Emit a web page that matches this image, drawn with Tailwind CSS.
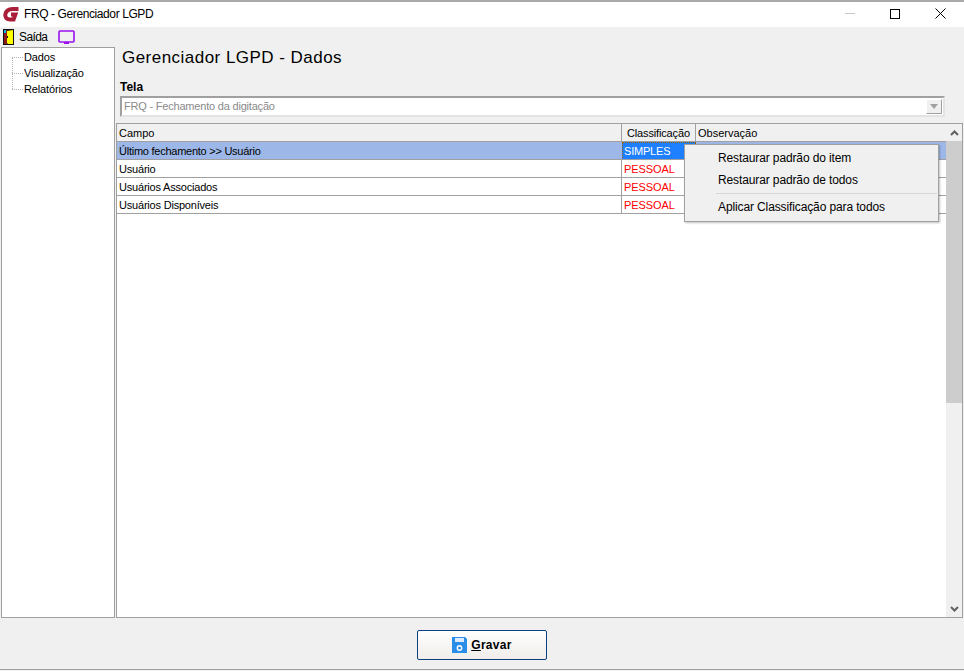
<!DOCTYPE html>
<html lang="en">
<head>
  <meta charset="UTF-8" />
  <title>FRQ - Gerenciador LGPD</title>
  <script src="https://cdn.jsdelivr.net/npm/@tailwindcss/browser@4"></script>
</head>
<body class="h-screen w-[964px] overflow-hidden bg-[#f0f0f0] font-['Liberation_Sans',sans-serif] text-[12px] text-black">
  <div class="relative flex h-[671px] flex-col">
    <!-- Title bar -->
    <div class="flex h-[27px] items-center border-t-2 border-t-[#a9a9a9] bg-white pb-[2px] pl-[3px]">
      <svg class="h-[17px] w-[17px]" viewBox="0 0 17 17">
        <path d="M15.5 4H9.5C5.5 4 3 6.3 2.4 9.2 1.8 12.4 3.8 14.5 7 14.5h3.6l1.8-5H8" fill="none" stroke="#ab1e3a" stroke-width="4" />
      </svg>
      <span class="ml-[4px] tracking-[-0.4px]">FRQ - Gerenciador LGPD</span>
      <div class="ml-auto flex items-center">
        <div class="mr-[35px] h-px w-[10px] bg-[#c8c8c8]"></div>
        <div class="mr-[35px] h-[10px] w-[10px] border border-black"></div>
        <svg class="mr-[18px] h-[11px] w-[11px]" viewBox="0 0 11 11"><path d="M.5.5l10 10M10.5.5l-10 10" stroke="#000" fill="none" /></svg>
      </div>
    </div>

    <!-- Menu bar -->
    <div class="flex h-[20px] items-center pl-[3px]">
      <svg class="h-[16px] w-[11px]" viewBox="0 0 11 16">
        <rect width="11" height="16" fill="#111" />
        <rect x="1" y="1" width="3" height="14" fill="#8a1a1a" />
        <path d="M4 2l6-1v14H5l-1-1z" fill="#ffff00" />
        <path d="M1 1h2v3H1z" fill="#00b5e8" />
        <path d="M4 7h1v2H4z" fill="#111" />
      </svg>
      <span class="ml-[5px] tracking-[-0.6px]">Saída</span>
      <svg class="ml-[11px] h-[15px] w-[17px]" viewBox="0 0 17 15">
        <rect x="1" y="1" width="15" height="11" rx="1" fill="none" stroke="#9b10f0" stroke-width="1.6" />
        <path d="M6 13h5" stroke="#9b10f0" stroke-width="2" />
      </svg>
    </div>

    <!-- Body -->
    <div class="flex h-[571px] pl-[1px]">
      <!-- Tree -->
      <div class="relative h-full w-[114px] shrink-0 border border-[#a0a0a0] bg-white pt-[1px] text-[11px] tracking-[-0.15px]">
        <div class="absolute left-[10px] top-[9px] h-[32px] border-l border-dotted border-[#b4b4b4]"></div>
        <div class="flex h-[16px] items-center pl-[10px]"><span class="w-[11px] border-t border-dotted border-[#b4b4b4]"></span><span class="ml-px">Dados</span></div>
        <div class="flex h-[16px] items-center pl-[10px]"><span class="w-[11px] border-t border-dotted border-[#b4b4b4]"></span><span class="ml-px">Visualização</span></div>
        <div class="flex h-[16px] items-center pl-[10px]"><span class="w-[11px] border-t border-dotted border-[#b4b4b4]"></span><span class="ml-px">Relatórios</span></div>
      </div>

      <!-- Content -->
      <div class="flex min-w-0 flex-1 flex-col">
        <h1 class="ml-[7px] mt-px h-[28px] text-[17px] leading-[20px] tracking-[0.47px]">Gerenciador LGPD - Dados</h1>
        <div class="ml-[5px] mt-[2px] h-[18px] pt-px font-bold leading-[17px]">Tela</div>
        <div class="ml-[5px] flex h-[21px] w-[825px] items-center border-2 border-[#a0a0a0] border-r-[#e3e3e3] border-b-[#e3e3e3] bg-white pl-[2px] pr-px text-[11px] tracking-[-0.2px] text-[#8a8a8a]">
          FRQ - Fechamento da digitação
          <div class="ml-auto flex h-[15px] w-[16px] items-center justify-center border border-white border-r-[#a0a0a0] border-b-[#a0a0a0] bg-[#f0f0f0]">
            <div class="h-0 w-0 border-x-[4px] border-t-[5px] border-x-transparent border-t-[#a0a0a0]"></div>
          </div>
        </div>

        <!-- Grid -->
        <div class="ml-px mr-[1px] mt-[6px] flex min-h-0 flex-1 border border-[#a0a0a0] bg-white text-[11px] leading-[19px]">
          <div class="flex min-w-0 flex-1 flex-col">
            <div class="flex h-[17px] shrink-0 bg-[#f0f0f0]">
              <div class="w-[505px] border-r border-[#a0a0a0] pl-[2px]">Campo</div>
              <div class="w-[74px] border-r border-[#a0a0a0] pl-[5px] tracking-[-0.15px]">Classificação</div>
              <div class="flex-1 pl-[2px]">Observação</div>
            </div>
            <div class="flex h-[18px] border-t border-[#a0a0a0] bg-[#9db8e8]">
              <div class="w-[505px] pl-[2px] tracking-[-0.25px]">Último fechamento &gt;&gt; Usuário</div>
              <div class="h-[18px] w-[74px] border border-dotted border-[#a06000] bg-[#1e80ff] pl-px leading-[17px] tracking-[-0.2px] text-white">SIMPLES</div>
            </div>
            <div class="flex h-[18px] border-t border-[#a0a0a0]">
              <div class="w-[505px] border-r border-[#a0a0a0] pl-[2px] tracking-[-0.2px]">Usuário</div>
              <div class="w-[74px] border-r border-[#a0a0a0] pl-[2px] tracking-[-0.1px] text-[#ff0000]">PESSOAL</div>
            </div>
            <div class="flex h-[18px] border-t border-[#a0a0a0]">
              <div class="w-[505px] border-r border-[#a0a0a0] pl-[2px] tracking-[-0.2px]">Usuários Associados</div>
              <div class="w-[74px] border-r border-[#a0a0a0] pl-[2px] tracking-[-0.1px] text-[#ff0000]">PESSOAL</div>
            </div>
            <div class="flex h-[19px] border-y border-[#a0a0a0]">
              <div class="w-[505px] border-r border-[#a0a0a0] pl-[2px] tracking-[-0.2px]">Usuários Disponíveis</div>
              <div class="w-[74px] border-r border-[#a0a0a0] pl-[2px] tracking-[-0.1px] text-[#ff0000]">PESSOAL</div>
            </div>
          </div>
          <!-- Scrollbar -->
          <div class="flex w-[16px] shrink-0 flex-col bg-[#f0f0f0]">
            <div class="flex h-[17px] items-center justify-center">
              <svg class="h-[6px] w-[9px]" viewBox="0 0 9 6"><path d="M1 5l3.5-3.5L8 5" fill="none" stroke="#606060" stroke-width="2" /></svg>
            </div>
            <div class="h-[262px] bg-[#cdcdcd]"></div>
            <div class="mt-auto flex h-[17px] items-center justify-center">
              <svg class="h-[6px] w-[9px]" viewBox="0 0 9 6"><path d="M1 1l3.5 3.5L8 1" fill="none" stroke="#606060" stroke-width="2" /></svg>
            </div>
          </div>
        </div>
      </div>
    </div>

    <!-- Footer -->
    <div class="flex h-[52px] items-start justify-center border-b border-[#a0a0a0] pt-[12px]">
      <button class="flex h-[30px] w-[130px] items-center justify-center rounded-[2px] border border-[#0b3f80] bg-gradient-to-b from-white to-[#f0edea] font-bold">
        <svg class="mr-[4px] h-[16px] w-[15px]" viewBox="0 0 15 16">
          <path d="M0 0h13l2 2v14H0z" fill="#2a8ee8" />
          <rect x="3" y="1" width="9" height="4" fill="#dbeafe" />
          <circle cx="7.5" cy="11" r="2.2" fill="none" stroke="#fff" stroke-width="1.4" />
        </svg>
        <span class="tracking-[0.3px]"><span class="underline">G</span>ravar</span>
      </button>
    </div>

    <!-- Context menu -->
    <div class="absolute left-[684px] top-[144px] h-[78px] w-[255px] border border-[#a0a0a0] bg-[#f0f0f0] tracking-[-0.12px] shadow-[1px_1px_2px_rgba(0,0,0,0.25)]">
      <div class="mt-[2px] flex h-[22px] items-center pl-[33px]">Restaurar padrão do item</div>
      <div class="flex h-[22px] items-center pl-[33px]">Restaurar padrão de todos</div>
      <div class="my-[2px] ml-[31px] mr-px h-px bg-[#d7d7d7]"></div>
      <div class="mt-[2px] flex h-[22px] items-center pl-[33px]">Aplicar Classificação para todos</div>
    </div>
  </div>
</body>
</html>
